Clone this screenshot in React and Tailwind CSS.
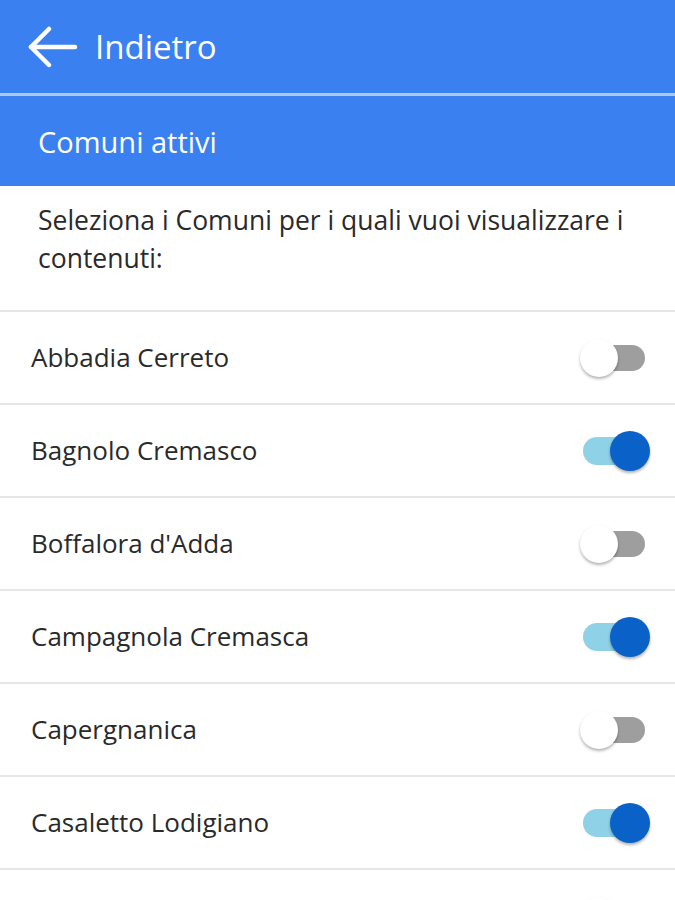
import React from "react";

const rows = [
  { name: "Abbadia Cerreto", on: false },
  { name: "Bagnolo Cremasco", on: true },
  { name: "Boffalora d'Adda", on: false },
  { name: "Campagnola Cremasca", on: true },
  { name: "Capergnanica", on: false },
  { name: "Casaletto Lodigiano", on: true },
  { name: "", on: false },
];

function Toggle({ on }) {
  return (
    <div className="w-[70px] h-[42px] flex items-center shrink-0">
      {on ? (
        <div className="ml-[3px] w-[57px] h-[28px] rounded-full bg-[#8fd1e6] flex items-center">
          <div className="ml-auto -mr-[10px] w-[40px] h-[40px] rounded-full bg-[#0a62c8] shadow-[0_2px_3px_rgba(0,0,0,0.3)] shrink-0" />
        </div>
      ) : (
        <div className="ml-[3px] w-[62px] h-[26px] rounded-full bg-[#9e9e9e] flex items-center">
          <div className="-ml-[3px] w-[38px] h-[38px] rounded-full bg-white shadow-[0_2px_3px_rgba(0,0,0,0.3)] shrink-0" />
        </div>
      )}
    </div>
  );
}

export default function App() {
  return (
    <div className="w-[675px] h-[900px] overflow-hidden bg-white" style={{ fontFamily: "'Open Sans', 'Noto Sans', sans-serif" }}>
      <div className="h-[93px] bg-[#3a80f0] flex items-center pl-[28px]">
        <svg width="50" height="44" viewBox="0 0 50 44" fill="none" stroke="white" strokeWidth="4.5" strokeLinecap="round" strokeLinejoin="round">
          <path d="M3 22 H47" />
          <path d="M21 4 L3 22 L21 40" />
        </svg>
        <span className="ml-[17px] text-white text-[33px] leading-none">Indietro</span>
      </div>
      <div className="h-[3px] bg-[#a9cbf7]" />
      <div className="h-[90px] bg-[#3a80f0] flex items-center pl-[38px]">
        <span className="text-white text-[29px] leading-none">Comuni attivi</span>
      </div>
      <div className="h-[124px] pl-[38px] pr-[20px] pt-[15px] text-[26.5px] leading-[38px] text-[#2a2a2a]">
        Seleziona i Comuni per i quali vuoi visualizzare i contenuti:
      </div>
      {rows.map((r, i) => (
        <div key={i} className="h-[93px] border-t-2 border-[#e6e6e6] flex items-center justify-between pl-[31px] pr-[25px]">
          <span className="text-[26px] text-[#2a2a2a]">{r.name}</span>
          <Toggle on={r.on} />
        </div>
      ))}
    </div>
  );
}
